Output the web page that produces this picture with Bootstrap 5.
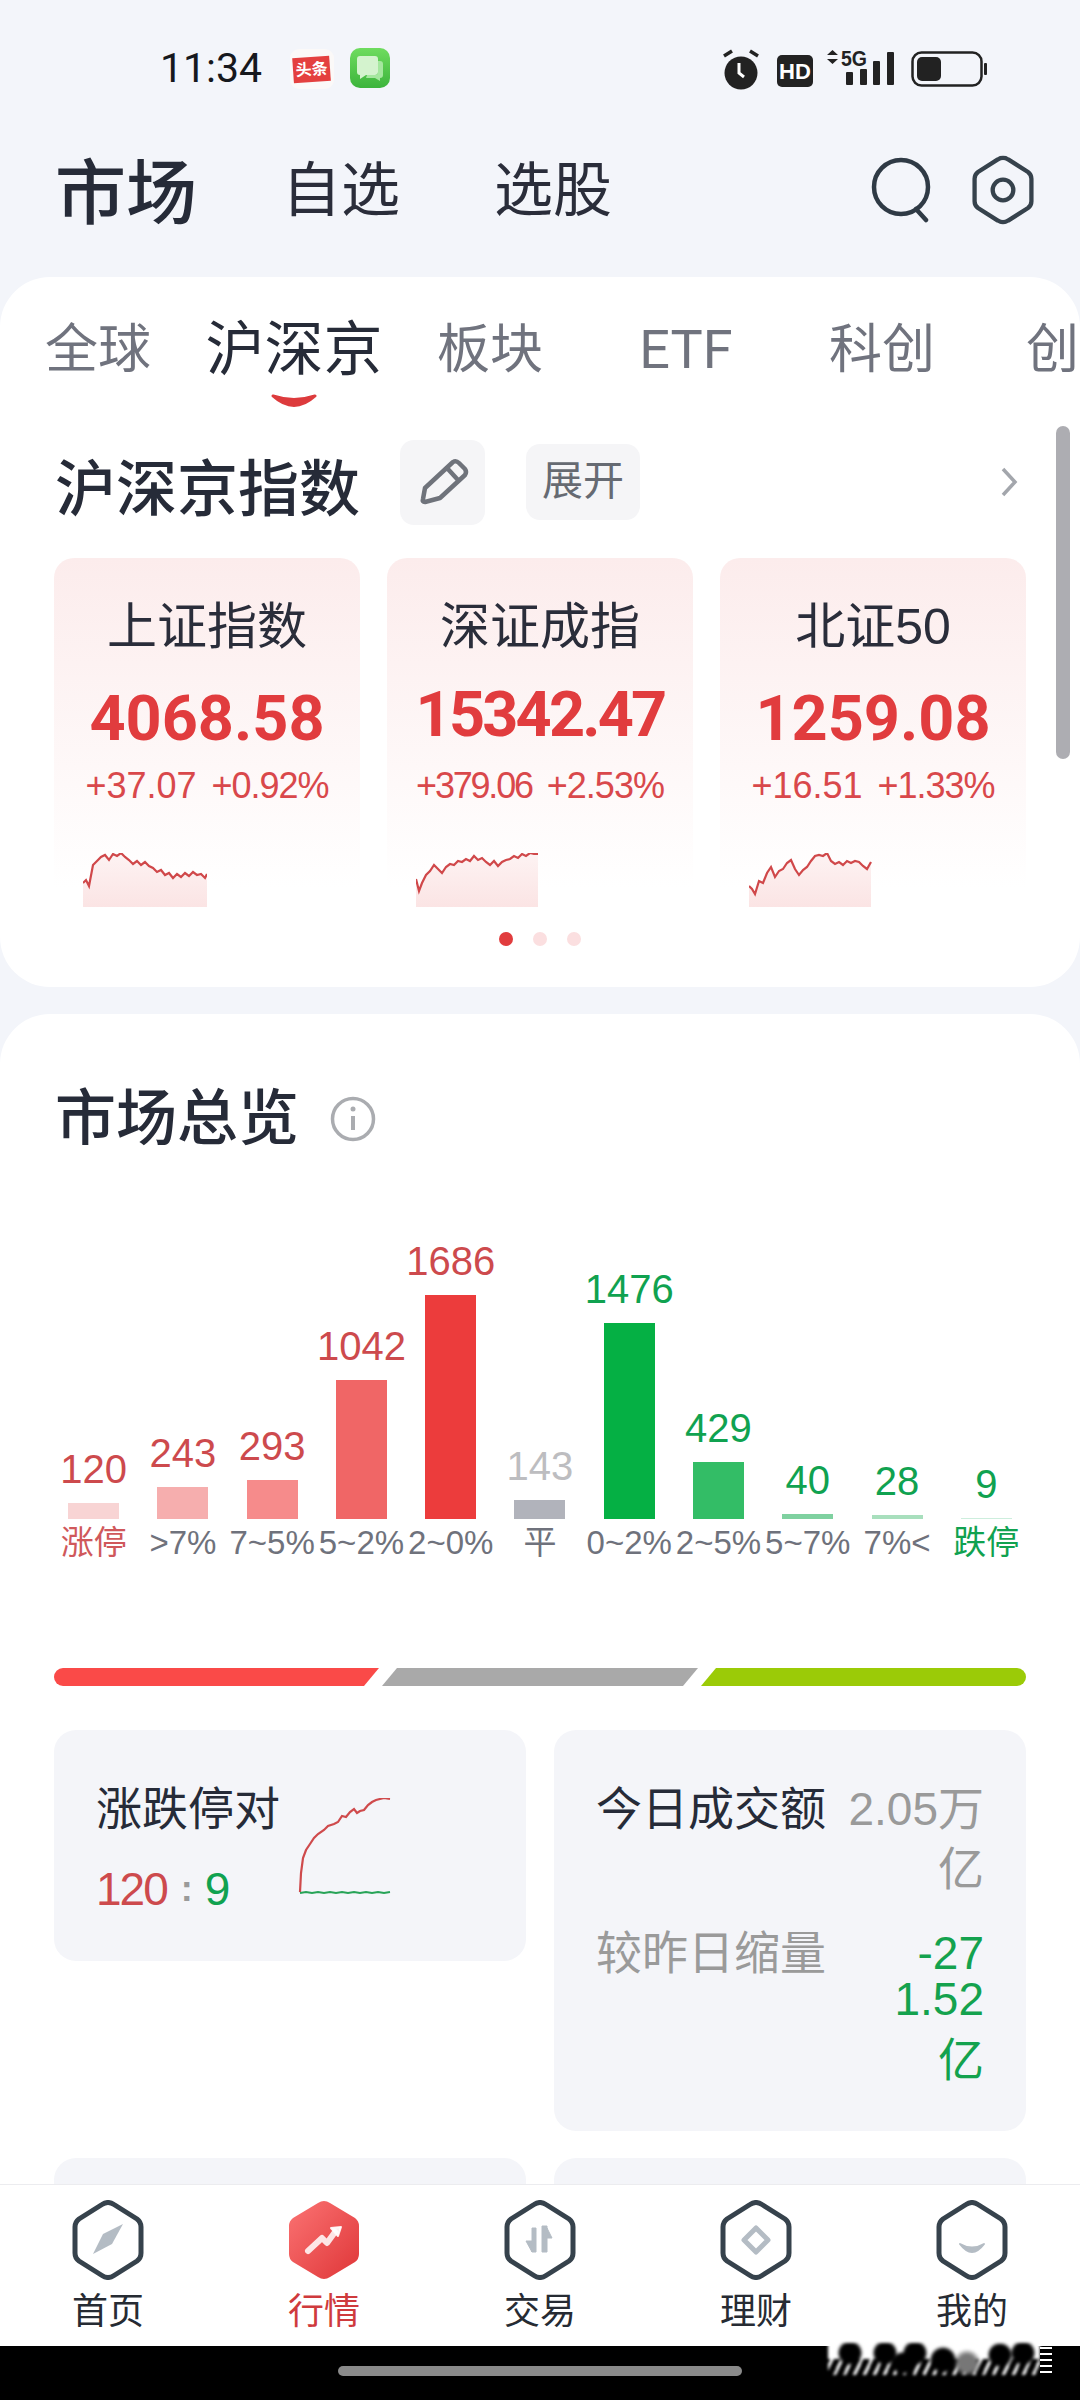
<!DOCTYPE html>
<html lang="zh-CN">
<head>
<meta charset="UTF-8">
<title>市场</title>
<link href="https://cdn.jsdelivr.net/npm/bootstrap@5.3.3/dist/css/bootstrap.min.css" rel="stylesheet">
<style>
html,body{margin:0;width:1080px;height:2400px;overflow:hidden}
body{background:#f3f5fa;color:#262b38;font-family:"Liberation Sans","Noto Sans CJK SC",sans-serif}
.phone{width:1080px;height:2400px}
.main-scroll{min-height:0}
/* status + header */
.status-row{height:110px;padding:0 0 21px 160px}
.time-txt{font:400 41px/1 Roboto,sans-serif;color:#16181d;width:130px}
.status-right{margin:0 88px -6px 0}
.top-row{height:167px;padding:0 46px 7px 55px}
.top-main{font-size:71px;font-weight:500;line-height:1;margin:6px 85px 0 0}
.top-sub{font-size:59px;line-height:1;margin:2px 94px 0 0;color:#2a2d3a}
.search-ico{margin-right:36px}
/* cards */
.sheet{background:#fff;border-radius:50px}
.sheet-one{height:710px;position:relative}
.tab-row{height:135px}
.tab-item{flex:0 0 196px;text-align:center;font-size:53px;line-height:76px;padding-top:35px;color:#70737e;position:relative;white-space:nowrap}
.tab-item.on{font-size:59px;color:#262b38}
.tab-item.tab-etf{font:400 54px/76px Roboto,sans-serif}
.tab-item.tab-cut{flex:0 0 100px;text-align:left;padding-left:46px}
.tab-smile{position:absolute;left:74px;top:116px}
.sec-head{height:140px;padding:0 62px 0 55px}
.sec-title{font-size:61px;font-weight:500;line-height:72px;margin-top:16px}
.edit-btn{width:85px;height:85px;background:#f5f5f7;border-radius:14px;margin-left:40px}
.open-btn{width:114px;height:76px;background:#f5f5f7;border-radius:14px;margin-left:41px;font-size:41px;color:#666a72}
.idx-row{margin-top:6px;padding:0 54px;gap:27px}
.idx-tile{width:306px;height:358px;border-radius:20px;background:linear-gradient(#fcecec,#fff 92%);padding-top:40px;text-align:center}
.idx-name{font-size:50px;line-height:58px;color:#2a2d3a}
.idx-price{font:700 63px/72px Roboto,sans-serif;color:#e13c3e;margin-top:27px}
.idx-price.up4{margin-top:23px;padding-bottom:4px;letter-spacing:-2.800px}
.idx-chg{font-size:36px;line-height:44px;color:#d9484b;margin-top:9px;gap:15px;white-space:nowrap}
.chg-pct{letter-spacing:-1px}
.chg-tight{letter-spacing:-2.200px}
.idx-spark{display:block;margin:45px 0 0 29px}
.dot-row{margin-top:16px;gap:20px}
.dot-item{width:14px;height:14px;border-radius:50%;background:#fbdfe0}
.dot-item.on{background:#e13c3e}
.scroll-thumb{position:absolute;left:1056px;top:149px;width:14px;height:333px;border-radius:7px;background:#adadb2}
.sheet-two{margin-top:27px;padding-top:67px;border-radius:50px 50px 0 0;height:1400px}
.ov-title{padding-left:55px;font-size:61px;font-weight:500;line-height:72px;margin-top:2px;gap:31px}
/* bar chart */
.chart-row{height:412px;padding:0 49px}
.bar-col{flex:1 1 0;width:0;text-align:center}
.bar-val{font-size:40px;line-height:46px;margin-bottom:11px}
.bar-box{width:51px}
.bar-lbl{font-size:33px;line-height:48px;color:#6f727c;white-space:nowrap}
.c-red{color:#cd4a4d}
.c-grn{color:#10a250}
.c-gry{color:#bdbdc0}
.bar-lbl.c-red{color:#d0585b}
.strip-row{margin:101px 54px 0;height:18px;gap:3px}
.strip-a{width:326px;background:#fa4a48;border-radius:9px 0 0 9px;clip-path:polygon(0 0,100% 0,calc(100% - 15px) 100%,0 100%)}
.strip-b{width:317px;background:#a9a9a9;clip-path:polygon(15px 0,100% 0,calc(100% - 15px) 100%,0 100%)}
.strip-c{width:326px;background:#9bcb07;border-radius:0 9px 9px 0;clip-path:polygon(15px 0,100% 0,100% 100%,0 100%)}
.tile-grid{display:grid;grid-template-columns:472px 472px;column-gap:28px;row-gap:27px;margin:44px 54px 0;align-items:start}
.tile-box{background:#f4f5f9;border-radius:22px}
.tile-l{height:231px;padding:49px 0 0 42px}
.tile-r{height:401px;padding:49px 42px 0 42px}
.tile-e{height:120px}
.tile-h{font-size:46px;line-height:60px;white-space:nowrap}
.tile-n{font-size:46px;line-height:60px;margin-top:20px;letter-spacing:-2px;gap:14px}
.tile-sep{color:#9a9a9a;font-size:36px;font-weight:700}
.tile-spark{display:block;margin:19px 0 0 18px}
.tv-col{width:142px;text-align:right;font-size:46px;line-height:60px;color:#9a9a9a}
.tv-sub{margin-top:24px}
.tv-lab{color:#9a9a9a}
.tv-green{color:#14a24e;padding-top:7px}
.tv-line{line-height:46px}
.tv-last{line-height:60px;margin-top:8px}
/* tab bar */
.bot-bar{height:162px;background:#fff;border-top:1px solid #ececef;padding-top:15px}
.bot-item{flex:1 1 0;text-align:center;font-size:36px;line-height:50px;color:#262b33}
.bot-item svg{display:block;margin:0 auto 7px}
.bot-item.on{color:#cf3a3d}
.sys-bar{height:54px;background:#000;position:relative;padding-top:20px}
.home-pill{width:404px;height:10px;border-radius:5px;background:#8a8a8a;margin:0 auto}
.wm-blur{position:absolute;left:828px;top:-3px;width:212px;height:32px;filter:blur(1.5px);
  background:
    radial-gradient(circle 13px at 22px 10px,#000 75%,transparent),
    radial-gradient(circle 13px at 57px 10px,#000 75%,transparent),
    radial-gradient(circle 13px at 87px 10px,#000 75%,transparent),
    radial-gradient(circle 12px at 75px 20px,#000 75%,transparent),
    radial-gradient(circle 14px at 115px 17px,#000 75%,transparent),
    radial-gradient(circle 13px at 172px 12px,#000 75%,transparent),
    radial-gradient(circle 13px at 195px 10px,#000 75%,transparent),
    radial-gradient(circle 14px at 139px 20px,#777 60%,transparent),
    linear-gradient(#fff,#fff) 0 0/212px 16px no-repeat,
    repeating-linear-gradient(115deg,#fff 0 3px,#000 3px 9px)}
.wm-edge{position:absolute;left:1040px;top:1px;width:12px;height:26px;background:repeating-linear-gradient(#fff 0 2px,#000 2px 6px)}
</style>
</head>
<body>
<svg width="0" height="0" class="position-absolute">
  <symbol id="hx" viewBox="0 0 72 80"><path d="M30 4.500Q36 0.500 42 4.500L65 19Q69 22 69 27V53Q69 58 65 61L42 75.500Q36 79.500 30 75.500L7 61Q3 58 3 53V27Q3 22 7 19Z" fill="none" stroke="#36424c" stroke-width="5"/></symbol>
  <linearGradient id="redg" x1="0" y1="0" x2="1" y2="1"><stop offset="0" stop-color="#fb7373"/><stop offset="1" stop-color="#df3638"/></linearGradient>
  <linearGradient id="spk" x1="0" y1="0" x2="0" y2="1"><stop offset="0" stop-color="#fdf3f3"/><stop offset="1" stop-color="#fbe4e4"/></linearGradient>
</svg>

<div class="phone d-flex flex-column">
  <div class="main-scroll flex-grow-1 overflow-hidden">

    <div class="status-row d-flex align-items-end">
      <div class="time-txt">11:34</div>
      <svg width="110" height="44" viewBox="0 0 110 44" class="flex-shrink-0">
        <rect x="0" y="4" width="44" height="40" rx="9" fill="#fbf9f8"/>
        <g transform="rotate(-4 21 24)">
          <rect x="3" y="12" width="37" height="25" fill="#e4403f"/>
          <text x="21.500" y="30" font-size="16" font-weight="700" fill="#fff" text-anchor="middle" font-family="Noto Sans CJK SC">头条</text>
        </g>
        <linearGradient id="msgg" x1="0" y1="0" x2="0" y2="1"><stop offset="0" stop-color="#6fdc5f"/><stop offset="1" stop-color="#3cb43c"/></linearGradient>
        <rect x="60" y="3" width="40" height="40" rx="10" fill="url(#msgg)"/>
        <path d="M70 11h15a3 3 0 0 1 3 3v13a3 3 0 0 1-3 3h-9l-6 4v-4a3 3 0 0 1-3-3V14a3 3 0 0 1 3-3z" fill="#d4f3ce"/>
        <path d="M88 16h2a3 3 0 0 1 3 3v11a3 3 0 0 1-3 3v3l-5-3h-9l1-3h8a3 3 0 0 0 3-3z" fill="#a5e79f"/>
      </svg>
      <div class="flex-grow-1"></div>
      <svg width="270" height="50" viewBox="720 45 270 50" class="status-right flex-shrink-0">
        <circle cx="739" cy="73" r="16.500" fill="#222"/>
        <path d="M722 56l8-5M756 56l-8-5" stroke="#222" stroke-width="3.500"/>
        <path d="M737 63v10l5 4" stroke="#fff" stroke-width="3" fill="none"/>
        <rect x="775" y="55" width="36" height="32" rx="5" fill="#222"/>
        <text x="793" y="79" font-family="Liberation Sans" font-weight="700" font-size="22" fill="#fff" text-anchor="middle">HD</text>
        <path d="M825 55l5.500-5 5.500 5zM825 59l5.500 5 5.500-5z" fill="#222"/>
        <text x="839" y="66" font-family="Liberation Sans" font-weight="700" font-size="22" fill="#222" textLength="26" lengthAdjust="spacingAndGlyphs">5G</text>
        <rect x="844" y="72" width="7" height="13" rx="1" fill="#222"/>
        <rect x="858" y="69" width="7" height="16" rx="1" fill="#222"/>
        <rect x="871" y="61" width="7" height="24" rx="1" fill="#222"/>
        <rect x="885" y="52" width="7" height="33" rx="1" fill="#222"/>
        <rect x="910.500" y="52.500" width="69" height="33" rx="9" fill="none" stroke="#222" stroke-width="2.500"/>
        <rect x="915" y="57" width="24" height="24" rx="5" fill="#222"/>
        <rect x="982" y="63" width="3" height="12" rx="1" fill="#222"/>
      </svg>
    </div>

    <div class="top-row d-flex align-items-center">
      <div class="top-main">市场</div>
      <div class="top-sub">自选</div>
      <div class="top-sub">选股</div>
      <div class="flex-grow-1"></div>
      <svg width="66" height="66" viewBox="0 0 66 66" class="search-ico flex-shrink-0">
        <circle cx="31" cy="30" r="27" fill="none" stroke="#2f3a45" stroke-width="4.500"/>
        <path d="M46 52l10 11" stroke="#2f3a45" stroke-width="4.500" stroke-linecap="round"/>
      </svg>
      <svg width="62" height="70" viewBox="0 0 72 80" class="flex-shrink-0">
        <use href="#hx"/>
        <circle cx="36" cy="40" r="12" fill="none" stroke="#36424c" stroke-width="5"/>
      </svg>
    </div>

    <section class="sheet sheet-one">
      <div class="tab-row d-flex overflow-hidden">
        <div class="tab-item">全球</div>
        <div class="tab-item on">沪深京
          <svg class="tab-smile" width="48" height="16" viewBox="0 0 48 16"><path d="M3 3Q24 22 45 3Q24 10 3 3Z" fill="#dd3b3d" stroke="#dd3b3d" stroke-width="3" stroke-linejoin="round"/></svg>
        </div>
        <div class="tab-item">板块</div>
        <div class="tab-item tab-etf">ETF</div>
        <div class="tab-item">科创</div>
        <div class="tab-item tab-cut">创</div>
      </div>

      <div class="sec-head d-flex align-items-center">
        <div class="sec-title">沪深京指数</div>
        <div class="edit-btn">
          <svg width="85" height="85" viewBox="0 0 85 85" class="d-block"><path d="M25 48L53 22Q56 20 59 23L65 29Q67 32 65 35L40 58 25 62Q22 62 23 59ZM47 28L58 40" fill="none" stroke="#6f737b" stroke-width="4.500" stroke-linejoin="round"/></svg>
        </div>
        <div class="open-btn d-flex align-items-center justify-content-center">展开</div>
        <div class="flex-grow-1"></div>
        <svg width="18" height="30" viewBox="0 0 18 30"><path d="M3 2l12 13L3 28" fill="none" stroke="#a3a6ac" stroke-width="3.500"/></svg>
      </div>

      <div class="idx-row d-flex">
        <div class="idx-tile">
          <div class="idx-name">上证指数</div>
          <div class="idx-price">4068.58</div>
          <div class="idx-chg d-flex justify-content-center"><span>+37.07</span><span class="chg-pct">+0.92%</span></div>
          <svg class="idx-spark" width="124" height="54" viewBox="0 0 124 54">
            <polygon points="0,54 0,30 3,27 6,33 10,12 14,8 18,4 22,2 26,7 30,1 34,3 38,0 42,4 46,7 50,11 54,8 58,12 62,9 66,13 70,15 74,19 78,17 82,22 86,20 90,25 94,21 98,24 102,20 106,23 110,19 114,22 118,21 122,25 124,21 124,54" fill="url(#spk)"/>
            <polyline points="0,30 3,27 6,33 10,12 14,8 18,4 22,2 26,7 30,1 34,3 38,0 42,4 46,7 50,11 54,8 58,12 62,9 66,13 70,15 74,19 78,17 82,22 86,20 90,25 94,21 98,24 102,20 106,23 110,19 114,22 118,21 122,25 124,21" fill="none" stroke="#d0484a" stroke-width="2.200"/>
          </svg>
        </div>
        <div class="idx-tile">
          <div class="idx-name">深证成指</div>
          <div class="idx-price up4">15342.47</div>
          <div class="idx-chg d-flex justify-content-center"><span class="chg-tight">+379.06</span><span class="chg-pct">+2.53%</span></div>
          <svg class="idx-spark" width="124" height="54" viewBox="0 0 124 54">
            <polygon points="0,54 0,26 3,38 6,30 10,22 14,18 18,12 22,16 26,20 30,14 34,11 38,12 42,8 46,9 50,6 54,8 58,3 62,7 66,5 70,9 74,12 78,8 82,13 86,9 90,7 94,6 98,3 102,5 106,1 110,3 114,0 118,1 122,1 122,54" fill="url(#spk)"/>
            <polyline points="0,26 3,38 6,30 10,22 14,18 18,12 22,16 26,20 30,14 34,11 38,12 42,8 46,9 50,6 54,8 58,3 62,7 66,5 70,9 74,12 78,8 82,13 86,9 90,7 94,6 98,3 102,5 106,1 110,3 114,0 118,1 122,1" fill="none" stroke="#d0484a" stroke-width="2.200"/>
          </svg>
        </div>
        <div class="idx-tile">
          <div class="idx-name">北证50</div>
          <div class="idx-price">1259.08</div>
          <div class="idx-chg d-flex justify-content-center"><span>+16.51</span><span class="chg-pct">+1.33%</span></div>
          <svg class="idx-spark" width="124" height="54" viewBox="0 0 124 54">
            <polygon points="0,54 0,33 3,36 6,41 10,28 14,30 18,20 22,14 26,24 30,18 34,16 38,10 42,7 46,16 50,22 54,17 58,14 62,8 66,3 70,2 74,3 78,0 82,8 86,11 90,9 94,12 98,8 102,10 106,8 110,9 114,13 118,16 122,9 122,54" fill="url(#spk)"/>
            <polyline points="0,33 3,36 6,41 10,28 14,30 18,20 22,14 26,24 30,18 34,16 38,10 42,7 46,16 50,22 54,17 58,14 62,8 66,3 70,2 74,3 78,0 82,8 86,11 90,9 94,12 98,8 102,10 106,8 110,9 114,13 118,16 122,9" fill="none" stroke="#d0484a" stroke-width="2.200"/>
          </svg>
        </div>
      </div>

      <div class="dot-row d-flex justify-content-center">
        <span class="dot-item on"></span><span class="dot-item"></span><span class="dot-item"></span>
      </div>
      <div class="scroll-thumb"></div>
    </section>

    <section class="sheet sheet-two">
      <div class="ov-title d-flex align-items-center">
        <span>市场总览</span>
        <svg width="46" height="46" viewBox="0 0 46 46"><circle cx="23" cy="23" r="20.500" fill="none" stroke="#aaacb0" stroke-width="3.500"/><path d="M23 20v14" stroke="#aaacb0" stroke-width="4"/><circle cx="23" cy="13" r="2.500" fill="#aaacb0"/></svg>
      </div>

      <div class="chart-row d-flex align-items-end">
        <div class="bar-col d-flex flex-column align-items-center"><div class="bar-val c-red">120</div><div class="bar-box" style="height:16px;background:#f8d4d4"></div><div class="bar-lbl c-red">涨停</div></div>
        <div class="bar-col d-flex flex-column align-items-center"><div class="bar-val c-red">243</div><div class="bar-box" style="height:32px;background:#f6aeae"></div><div class="bar-lbl">&gt;7%</div></div>
        <div class="bar-col d-flex flex-column align-items-center"><div class="bar-val c-red">293</div><div class="bar-box" style="height:39px;background:#f68b8b"></div><div class="bar-lbl">7~5%</div></div>
        <div class="bar-col d-flex flex-column align-items-center"><div class="bar-val c-red">1042</div><div class="bar-box" style="height:139px;background:#f06666"></div><div class="bar-lbl">5~2%</div></div>
        <div class="bar-col d-flex flex-column align-items-center"><div class="bar-val c-red">1686</div><div class="bar-box" style="height:224px;background:#ec3c3c"></div><div class="bar-lbl">2~0%</div></div>
        <div class="bar-col d-flex flex-column align-items-center"><div class="bar-val c-gry">143</div><div class="bar-box" style="height:19px;background:#b1b3bb"></div><div class="bar-lbl">平</div></div>
        <div class="bar-col d-flex flex-column align-items-center"><div class="bar-val c-grn">1476</div><div class="bar-box" style="height:196px;background:#05b044"></div><div class="bar-lbl">0~2%</div></div>
        <div class="bar-col d-flex flex-column align-items-center"><div class="bar-val c-grn">429</div><div class="bar-box" style="height:57px;background:#33bd66"></div><div class="bar-lbl">2~5%</div></div>
        <div class="bar-col d-flex flex-column align-items-center"><div class="bar-val c-grn">40</div><div class="bar-box" style="height:5px;background:#7fd1a0"></div><div class="bar-lbl">5~7%</div></div>
        <div class="bar-col d-flex flex-column align-items-center"><div class="bar-val c-grn">28</div><div class="bar-box" style="height:4px;background:#a8dfbd"></div><div class="bar-lbl">7%&lt;</div></div>
        <div class="bar-col d-flex flex-column align-items-center"><div class="bar-val c-grn">9</div><div class="bar-box" style="height:1px;background:#cdeedd"></div><div class="bar-lbl c-grn">跌停</div></div>
      </div>

      <div class="strip-row d-flex">
        <div class="strip-a"></div><div class="strip-b"></div><div class="strip-c"></div>
      </div>

      <div class="tile-grid">
        <div class="tile-box tile-l d-flex">
          <div>
            <div class="tile-h">涨跌停对</div>
            <div class="tile-n d-flex align-items-center"><span class="c-red">120</span><span class="tile-sep">:</span><span class="c-grn">9</span></div>
          </div>
          <svg class="tile-spark" width="93" height="98" viewBox="0 0 93 98">
            <polyline points="2,94 3,75 5,60 8,52 12,46 16,40 20,36 26,32 30,28 36,26 40,24 44,18 48,19 52,14 56,11 59,15 62,13 66,12 70,7 74,4 78,2 82,1 86,0 92,1" fill="none" stroke="#cf4a4c" stroke-width="2.200"/>
            <polyline points="2,95 8,94 14,95 20,94 26,95 32,94 38,95 44,94 50,95 56,94 62,95 68,94 74,95 80,94 86,95 92,94" fill="none" stroke="#27a357" stroke-width="2.200"/>
          </svg>
        </div>
        <div class="tile-box tile-r">
          <div class="d-flex justify-content-between">
            <div class="tile-h">今日成交额</div>
            <div class="tv-col">2.05万亿</div>
          </div>
          <div class="d-flex justify-content-between tv-sub">
            <div class="tile-h tv-lab">较昨日缩量</div>
            <div class="tv-col tv-green">
              <div class="tv-line">-27</div>
              <div class="tv-line">1.52</div>
              <div class="tv-last">亿</div>
            </div>
          </div>
        </div>
        <div class="tile-box tile-e"></div>
        <div class="tile-box tile-e"></div>
      </div>
    </section>
  </div>

  <nav class="bot-bar d-flex flex-shrink-0">
    <div class="bot-item">
      <svg width="72" height="80" viewBox="0 0 72 80"><use href="#hx"/><path d="M51 24L40 44 21 54 31 34z" fill="#b4bcc4"/></svg>
      首页
    </div>
    <div class="bot-item on">
      <svg width="72" height="80" viewBox="0 0 72 80"><path d="M30 3Q36 -1 42 3L67 18Q71 21 71 26V54Q71 59 67 62L42 77Q36 81 30 77L5 62Q1 59 1 54V26Q1 21 5 18Z" fill="url(#redg)"/><path d="M20 51L34 38 39 43 47 32" fill="none" stroke="#fff" stroke-width="6" stroke-opacity=".85" stroke-linecap="round" stroke-linejoin="round"/><path d="M43 28L53 27 50 36z" fill="#fff" fill-opacity=".9" stroke="#fff" stroke-opacity=".9" stroke-width="2" stroke-linejoin="round"/></svg>
      行情
    </div>
    <div class="bot-item">
      <svg width="72" height="80" viewBox="0 0 72 80"><use href="#hx"/><path d="M28 28h4v24h-4zM22 41h6v11zM38 26h5v26h-5zM43 28l5 10h-5z" fill="#b4bcc4" stroke="#b4bcc4" stroke-width="1" stroke-linejoin="round"/></svg>
      交易
    </div>
    <div class="bot-item">
      <svg width="72" height="80" viewBox="0 0 72 80"><use href="#hx"/><path d="M36 28L48 40 36 52 24 40z" fill="none" stroke="#b4bcc4" stroke-width="5" stroke-linejoin="round"/></svg>
      理财
    </div>
    <div class="bot-item">
      <svg width="72" height="80" viewBox="0 0 72 80"><use href="#hx"/><path d="M24 44Q36 60 48 44Q36 51 24 44Z" fill="#b4bcc4" stroke="#b4bcc4" stroke-width="2" stroke-linejoin="round"/></svg>
      我的
    </div>
  </nav>
  <div class="sys-bar flex-shrink-0">
    <div class="home-pill"></div>
    <div class="wm-blur"></div>
    <div class="wm-edge"></div>
  </div>
</div>
</body>
</html>
